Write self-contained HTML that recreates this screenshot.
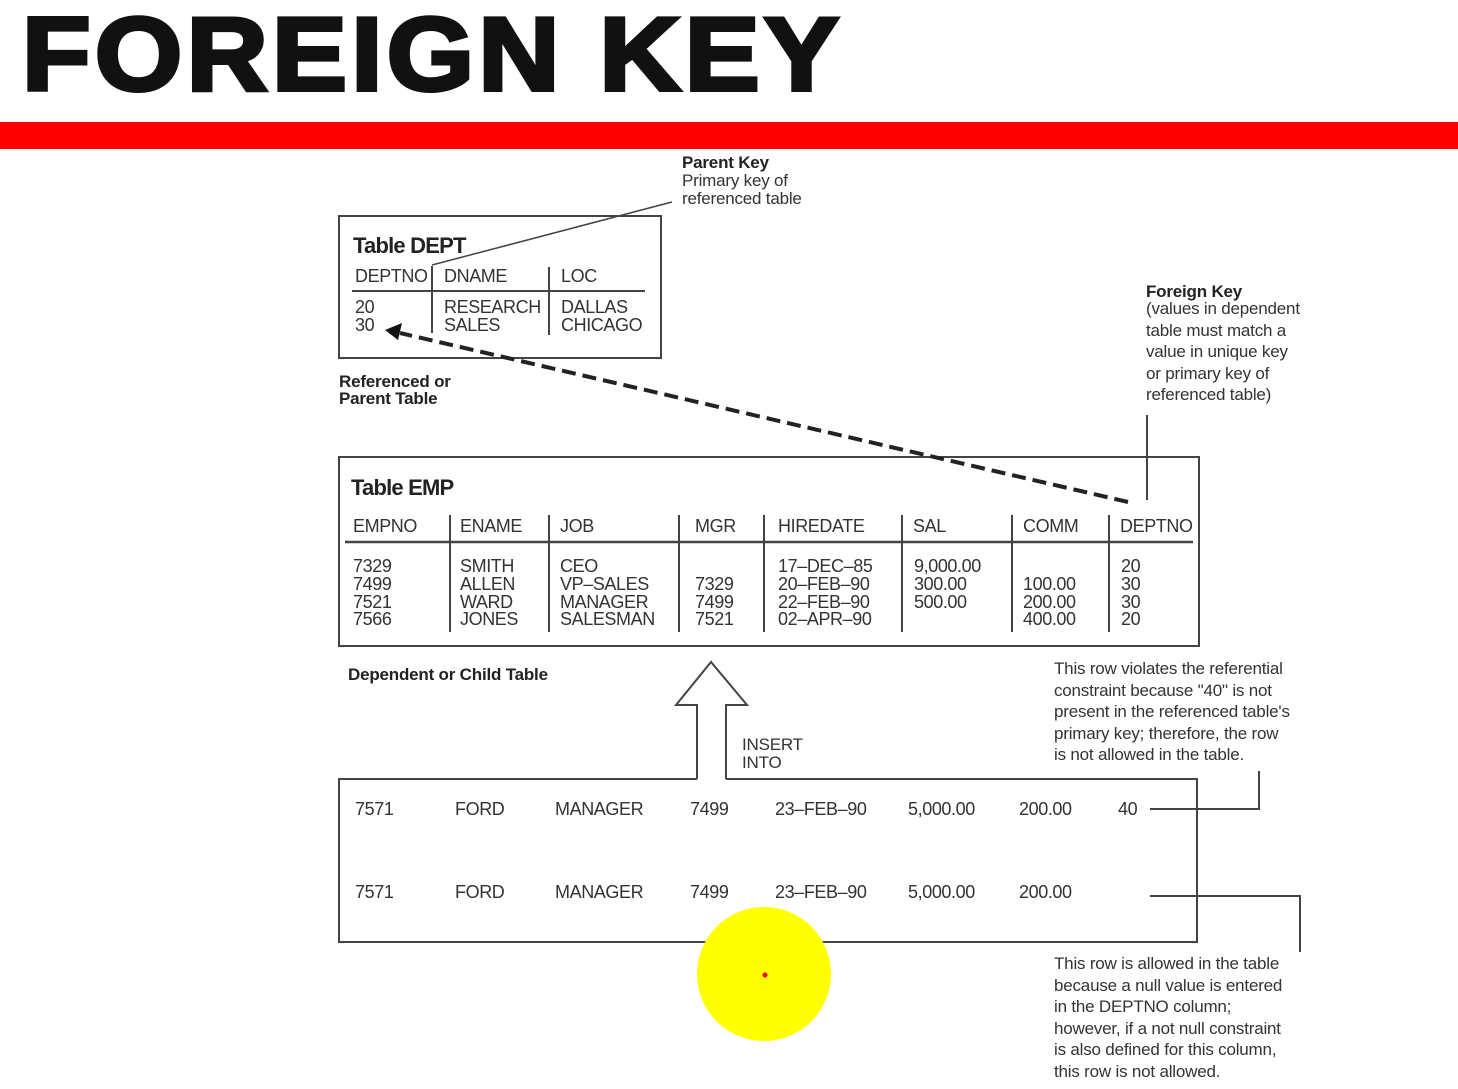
<!DOCTYPE html>
<html><head><meta charset="utf-8"><style>
html,body{margin:0;padding:0;background:#fff;width:1458px;height:1089px;overflow:hidden}
svg{display:block}
text{font-family:"Liberation Sans",sans-serif;fill:#333}
.t{font-size:18px;letter-spacing:-0.4px}
.s{font-size:17px;letter-spacing:-0.2px}
.b{font-weight:bold;fill:#222}
</style></head><body>
<svg width="1458" height="1089" viewBox="0 0 1458 1089">
<text x="0" y="0" transform="translate(22,90) scale(1.08,1)" style="font-size:104px;font-weight:bold;fill:#111;stroke:#111;stroke-width:4px;letter-spacing:4px">FOREIGN KEY</text>
<rect x="0" y="122" width="1458" height="27" fill="#f00"/>
<g stroke="#444" stroke-width="2" fill="none">
<rect x="339" y="216" width="322" height="142"/>
<line x1="352" y1="291" x2="645" y2="291"/>
<line x1="432" y1="266" x2="432" y2="333"/>
<line x1="549" y1="267" x2="549" y2="335"/>
<line x1="672" y1="202" x2="432" y2="265" stroke-width="1.5"/>
<rect x="339" y="457" width="860" height="189"/>
<line x1="345" y1="542" x2="1193" y2="542" stroke-width="2.5"/>
<line x1="450" y1="515" x2="450" y2="632"/>
<line x1="549" y1="515" x2="549" y2="632"/>
<line x1="679" y1="515" x2="679" y2="632"/>
<line x1="764" y1="515" x2="764" y2="632"/>
<line x1="902" y1="515" x2="902" y2="632"/>
<line x1="1012" y1="515" x2="1012" y2="632"/>
<line x1="1109" y1="515" x2="1109" y2="632"/>
<line x1="1147" y1="415" x2="1147" y2="500"/>
<path d="M697 779 L339 779 L339 942 L1197 942 L1197 779 L726 779"/>
<path d="M697 779 L697 705 L676 705 L711 662 L747 705 L726 705 L726 779"/>
<path d="M1150 809 L1259 809 L1259 771"/>
<path d="M1150 896 L1300 896 L1300 952"/>
</g>
<line x1="1128" y1="502" x2="400" y2="333" stroke="#222" stroke-width="4" stroke-dasharray="14,7"/>
<polygon points="385,330 402,323 398,340" fill="#111"/>
<text x="353" y="253" class="b" style="font-size:22px;letter-spacing:-0.8px">Table DEPT</text>
<text x="355" y="282" class="t">DEPTNO</text><text x="444" y="282" class="t">DNAME</text><text x="561" y="282" class="t">LOC</text>
<text x="355" y="313" class="t">20</text><text x="355" y="331" class="t">30</text>
<text x="444" y="313" class="t">RESEARCH</text><text x="444" y="331" class="t">SALES</text>
<text x="561" y="313" class="t">DALLAS</text><text x="561" y="331" class="t">CHICAGO</text>
<text x="682" y="168" class="s b">Parent Key</text>
<text x="682" y="186" class="s">Primary key of</text>
<text x="682" y="204" class="s">referenced table</text>
<text x="339" y="387" class="s b">Referenced or</text>
<text x="339" y="404" class="s b">Parent Table</text>
<text x="1146" y="297" class="s b">Foreign Key</text>
<text x="1146" y="314" class="s">(values in dependent</text>
<text x="1146" y="336" class="s">table must match a</text>
<text x="1146" y="357" class="s">value in unique key</text>
<text x="1146" y="379" class="s">or primary key of</text>
<text x="1146" y="400" class="s">referenced table)</text>
<text x="351" y="495" class="b" style="font-size:22px;letter-spacing:-0.8px">Table EMP</text>
<text x="353" y="532" class="t">EMPNO</text><text x="460" y="532" class="t">ENAME</text><text x="560" y="532" class="t">JOB</text><text x="695" y="532" class="t">MGR</text><text x="778" y="532" class="t">HIREDATE</text><text x="913" y="532" class="t">SAL</text><text x="1023" y="532" class="t">COMM</text><text x="1120" y="532" class="t">DEPTNO</text>
<text x="353" y="572" class="t">7329</text><text x="353" y="590" class="t">7499</text><text x="353" y="608" class="t">7521</text><text x="353" y="625" class="t">7566</text>
<text x="460" y="572" class="t">SMITH</text><text x="460" y="590" class="t">ALLEN</text><text x="460" y="608" class="t">WARD</text><text x="460" y="625" class="t">JONES</text>
<text x="560" y="572" class="t">CEO</text><text x="560" y="590" class="t">VP–SALES</text><text x="560" y="608" class="t">MANAGER</text><text x="560" y="625" class="t">SALESMAN</text>
<text x="695" y="590" class="t">7329</text><text x="695" y="608" class="t">7499</text><text x="695" y="625" class="t">7521</text>
<text x="778" y="572" class="t">17–DEC–85</text><text x="778" y="590" class="t">20–FEB–90</text><text x="778" y="608" class="t">22–FEB–90</text><text x="778" y="625" class="t">02–APR–90</text>
<text x="914" y="572" class="t">9,000.00</text><text x="914" y="590" class="t">300.00</text><text x="914" y="608" class="t">500.00</text>
<text x="1023" y="590" class="t">100.00</text><text x="1023" y="608" class="t">200.00</text><text x="1023" y="625" class="t">400.00</text>
<text x="1121" y="572" class="t">20</text><text x="1121" y="590" class="t">30</text><text x="1121" y="608" class="t">30</text><text x="1121" y="625" class="t">20</text>
<text x="348" y="680" class="s b">Dependent or Child Table</text>
<text x="742" y="750" class="s">INSERT</text><text x="742" y="768" class="s">INTO</text>
<text x="1054" y="674" class="s">This row violates the referential</text>
<text x="1054" y="696" class="s">constraint because "40" is not</text>
<text x="1054" y="717" class="s">present in the referenced table's</text>
<text x="1054" y="739" class="s">primary key; therefore, the row</text>
<text x="1054" y="760" class="s">is not allowed in the table.</text>
<text x="355" y="815" class="t">7571</text><text x="455" y="815" class="t">FORD</text><text x="555" y="815" class="t">MANAGER</text><text x="690" y="815" class="t">7499</text><text x="775" y="815" class="t">23–FEB–90</text><text x="908" y="815" class="t">5,000.00</text><text x="1019" y="815" class="t">200.00</text><text x="1118" y="815" class="t">40</text>
<text x="355" y="898" class="t">7571</text><text x="455" y="898" class="t">FORD</text><text x="555" y="898" class="t">MANAGER</text><text x="690" y="898" class="t">7499</text><text x="775" y="898" class="t">23–FEB–90</text><text x="908" y="898" class="t">5,000.00</text><text x="1019" y="898" class="t">200.00</text>
<circle cx="764" cy="974" r="67" fill="#ffff00"/>
<circle cx="765" cy="975" r="2.5" fill="#e00"/>
<text x="1054" y="969" class="s">This row is allowed in the table</text>
<text x="1054" y="991" class="s">because a null value is entered</text>
<text x="1054" y="1012" class="s">in the DEPTNO column;</text>
<text x="1054" y="1034" class="s">however, if a not null constraint</text>
<text x="1054" y="1055" class="s">is also defined for this column,</text>
<text x="1054" y="1077" class="s">this row is not allowed.</text>
</svg>
</body></html>
